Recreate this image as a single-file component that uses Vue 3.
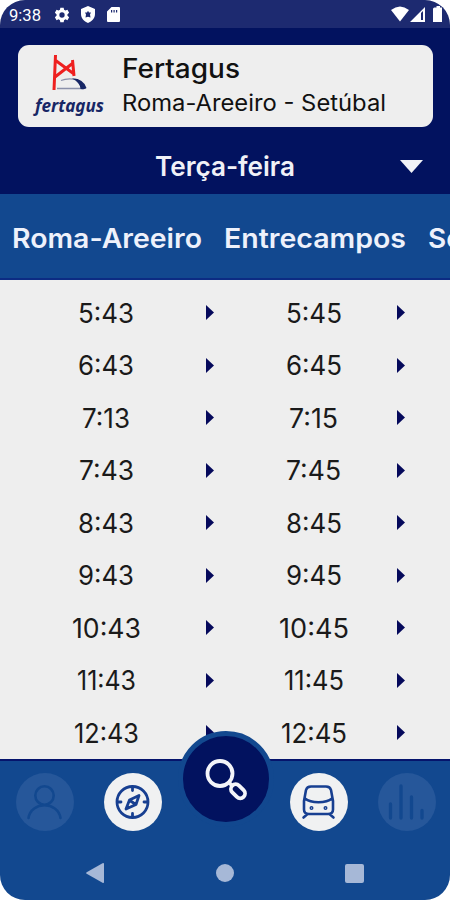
<script setup>
import { h } from 'vue'

// Single line of text set to an exact measure
const FitText = (p) =>
  h('svg', { width: p.w, height: p.size, style: { overflow: 'visible', display: 'block', flex: 'none' } }, [
    h('text', {
      x: 0,
      y: p.size * 0.864,
      'font-size': p.size,
      'font-weight': p.weight || 400,
      fill: 'currentColor',
      textLength: p.w,
      lengthAdjust: 'spacingAndGlyphs',
    }, p.text),
  ])
FitText.props = ['text', 'w', 'size', 'weight']

const stations = [
  { name: 'Roma-Areeiro', w: 190 },
  { name: 'Entrecampos', w: 182 },
  { name: 'Sete Rios', w: 126 },
]

const rows = [
  ['5:43', 56, '5:45', 56],
  ['6:43', 56, '6:45', 56],
  ['7:13', 48, '7:15', 49],
  ['7:43', 55, '7:45', 55],
  ['8:43', 56, '8:45', 56],
  ['9:43', 56, '9:45', 56],
  ['10:43', 69, '10:45', 70],
  ['11:43', 59, '11:45', 60],
  ['12:43', 65, '12:45', 66],
]
</script>

<template>
  <main class="phone">
    <div class="status">
      <span class="clock"><FitText text="9:38" :w="32" :size="17" /></span>
      <svg class="st-gear" width="16" height="16" viewBox="0 0 24 24"><path fill="#fff" fill-rule="evenodd" d="M9.5 1h5l.6 3.3 2 1.1 3.100-1.200 2.500 4.300-2.500 2.300v2.400l2.500 2.200-2.500 4.300-3.100-1.200-2 1.200-.6 3.300h-5l-.6-3.300-2-1.200-3.100 1.200-2.500-4.300 2.500-2.200v-2.400L1.300 8.500l2.500-4.300 3.100 1.200 2-1.100zM12 8a4 4 0 1 0 0 8 4 4 0 0 0 0-8z" /></svg>
      <svg class="st-shield" width="14" height="17" viewBox="0 0 14 17"><path fill="#fff" fill-rule="evenodd" d="M7 0l7 3v5c0 4-3 7.500-7 9-4-1.500-7-5-7-9V3zM7 4.700L6 6.500H4l1 2L4.500 11.500l2.500-.8 2.500.8-.5-3 1-2H8z" /></svg>
      <svg class="st-sd" width="13" height="15" viewBox="0 0 13 15"><path fill="#fff" fill-rule="evenodd" d="M4.500 0H12q1 0 1 1v13q0 1-1 1H1q-1 0-1-1V4.500zM4 3v2.500h1.200V3zm2.500 0v2.500h1.200V3zM9 3v2.500h1.200V3z" /></svg>
      <svg class="st-right" width="52" height="17" viewBox="0 0 52 17">
        <path fill="#fff" d="M0 4Q9-3 18 4L9 15.500z" />
        <path fill="#fff" fill-rule="evenodd" d="M34 1v15H19zM30 7v7h2V5z" />
        <path fill="#fff" d="M43.500 1.500h2V0h3.500v1.500h2V16h-9V3q0-1.500 1.500-1.500z" />
      </svg>
    </div>

    <header class="header">
      <div class="card">
        <div class="logo">
          <svg width="38" height="38" viewBox="0 0 38 38" fill="none">
            <path d="M3.500 1L2 36M20.500 6l1.500 16M3 6l19 14M3 23L21 9" stroke="#ee2020" stroke-width="3" />
            <path d="M9 26.500Q15 24 24 25.500L31 34.500H5" stroke="#8b91aa" stroke-width="1.300" />
            <path fill="#172665" d="M20 24.500Q31 24 34.500 34Q34 35.500 28.500 35Q28 28 20 24.500z" />
          </svg>
          <div class="brand"><FitText text="fertagus" :w="69" :size="17" :weight="700" /></div>
        </div>
        <div class="lines">
          <FitText text="Fertagus" :w="118" :size="26.5" :weight="500" />
          <FitText class="route" text="Roma-Areeiro - Setúbal" :w="264" :size="22.500" />
        </div>
      </div>
      <div class="day">
        <FitText text="Terça-feira" :w="140" :size="27" :weight="600" />
        <svg class="caret" width="23" height="13" viewBox="0 0 23 13"><path fill="#f2f3f7" d="M0 0h23L11.500 13z" /></svg>
      </div>
    </header>

    <div class="stations">
      <FitText v-for="s in stations" :key="s.name" :text="s.name" :w="s.w" :size="27" :weight="600" />
    </div>

    <section class="table">
      <div v-for="r in rows" :key="r[0]" class="row">
        <div class="cell"><FitText :text="r[0]" :w="r[1]" :size="26.5" /></div>
        <svg width="8" height="15" viewBox="0 0 8 15"><path fill="#05095b" d="M0 0l8 7.500L0 15z" /></svg>
        <div class="cell second"><FitText :text="r[2]" :w="r[3]" :size="26.5" /></div>
        <svg width="8" height="15" viewBox="0 0 8 15"><path fill="#05095b" d="M0 0l8 7.500L0 15z" /></svg>
      </div>
    </section>

    <footer class="bottom">
      <nav class="tabs">
        <div class="tab off">
          <svg width="58" height="58" viewBox="0 0 58 58" fill="none" stroke="#12488f" stroke-width="2.600" stroke-linecap="round"><circle cx="28.500" cy="22.500" r="9.200" /><path d="M12.500 45C15 28 42 28 44.500 45" /></svg>
        </div>
        <div class="tab">
          <svg width="58" height="58" viewBox="0 0 58 58" fill="none" stroke="#173f91" stroke-width="2.800" stroke-linecap="round" stroke-linejoin="round"><circle cx="28.500" cy="29" r="15.500" /><path d="M28.500 14v3.500M28.500 40.500V44M13.500 29H17M40 29h3.500M35 22.500l-3 9-10 4.500 3.500-9zM26 27.500l5 3.500" /></svg>
        </div>
        <div class="tab">
          <svg width="58" height="58" viewBox="0 0 58 58" fill="none" stroke="#173f91" stroke-width="2.600" stroke-linecap="round" stroke-linejoin="round"><path d="M21 13.500h15q4 0 5 3.500l2 11v8.500q0 4.500-5 4.500H19q-5 0-5-4.500V28l2-11q1-3.500 5-3.500zM15 25.500c6 5 21 5 27 0M17 41.500L13.500 44.500M40 41.500l3.500 3" /><circle cx="21.500" cy="35" r=".7" /><circle cx="35.500" cy="35" r=".7" /></svg>
        </div>
        <div class="tab off">
          <svg width="58" height="58" viewBox="0 0 58 58" fill="none" stroke="#12488f" stroke-width="3.300" stroke-linecap="round"><path d="M12.500 31v14M23 13v32M33.500 24v21M44 37.500V45" /></svg>
        </div>
      </nav>
      <div class="fab">
        <svg width="86" height="86" viewBox="0 0 86 86" fill="none" stroke="#f4f5fa" stroke-width="3.800" stroke-linecap="round"><circle cx="37" cy="37.500" r="12.500" /><path d="M46 46.500l3 3" /><rect x="47" y="50.500" width="16" height="9.500" rx="4.750" transform="rotate(45 55 55.200)" /></svg>
      </div>
      <div class="system">
        <svg width="18" height="20" viewBox="0 0 18 20"><path fill="#a6b8d7" d="M16.500.3Q18-.4 18 1v18q0 1.400-1.500.7L.7 10.800Q-.5 10 .7 9.200z" /></svg>
        <svg width="18" height="18" viewBox="0 0 18 18"><circle cx="9" cy="9" r="9" fill="#a6b8d7" /></svg>
        <svg width="19" height="19" viewBox="0 0 19 19"><rect width="19" height="19" rx="2" fill="#a6b8d7" /></svg>
      </div>
    </footer>
  </main>
</template>

<style>
body { margin: 0; background: #fff; }
</style>

<style scoped>
.phone {
  width: 450px;
  height: 900px;
  box-sizing: border-box;
  display: flex;
  flex-direction: column;
  overflow: hidden;
  border-radius: 25px;
  background: #eee;
  font-family: Inter, "Liberation Sans", sans-serif;
}
.status {
  height: 28px;
  display: flex;
  align-items: center;
  box-sizing: border-box;
  padding: 1px 7px 0 9px;
  background: #1d2a70;
  color: #fff;
  font-family: Roboto, sans-serif;
}
.clock { width: 45px; }
.st-shield { margin-left: 11px; }
.st-sd { margin-left: 12px; }
.st-right { margin-left: auto; }
.header {
  display: flex;
  flex-direction: column;
  height: 166px;
  padding-top: 17px;
  box-sizing: border-box;
  background: #02125f;
}
.card {
  display: flex;
  width: 415px;
  height: 82px;
  box-sizing: border-box;
  margin-left: 18px;
  border-radius: 11px;
  background: #eee;
  color: #111;
}
.logo { width: 104px; padding: 9px 0 0 17px; box-sizing: border-box; flex: none; }
.logo > svg { display: block; margin-left: 17px; }
.brand { margin-top: 5px; color: #172665; font-family: "Noto Sans", sans-serif; font-style: italic; }
.lines { display: flex; flex-direction: column; padding-top: 10px; }
.route { margin-top: 10px; }
.day {
  display: grid;
  grid-template-columns: 155px 1fr 50px;
  align-items: center;
  height: 67px;
  padding-top: 11px;
  box-sizing: border-box;
  color: #f0f1f7;
}
.day > :first-child { grid-column: 2; }
.stations {
  display: flex;
  gap: 22px;
  height: 86px;
  flex: none;
  padding: 30.500px 0 0 11.500px;
  box-sizing: border-box;
  overflow: hidden;
  background: #12488f;
  border-bottom: 2px solid #0c2b83;
  color: #eef1fb;
}
.table { height: 479px; flex: none; padding-top: 6.500px; box-sizing: border-box; overflow: hidden; color: #1a1a1a; }
.row { display: flex; align-items: center; height: 52.500px; }
.cell { display: flex; justify-content: center; width: 206px; padding-left: 6px; box-sizing: border-box; }
.cell.second { width: 183px; padding-left: 16px; }
.bottom {
  position: relative;
  height: 141px;
  flex: none;
  box-sizing: border-box;
  border-top: 2px solid #05146c;
  background: #12488f;
}
.tabs { display: grid; grid-template-columns: 58px 58px 58px 58px; column-gap: 30px; padding: 12px 0 0 16px; }
.tab { width: 58px; height: 58px; border-radius: 50%; background: #f0f1f2; }
.tab:nth-child(3) { margin-left: 98px; }
.tab:nth-child(4) { margin-left: 98px; }
.tab.off { background: #26579a; }
.tab svg { display: block; }
.fab {
  position: absolute;
  top: -30px;
  left: 178px;
  width: 86px;
  height: 86px;
  border: 5px solid #12488f;
  border-radius: 50%;
  background: #02125f;
}
.system { display: flex; align-items: center; padding: 32px 0 0 86px; }
.system svg:nth-child(2) { margin-left: 112px; }
.system svg:nth-child(3) { margin-left: 111px; }
</style>
